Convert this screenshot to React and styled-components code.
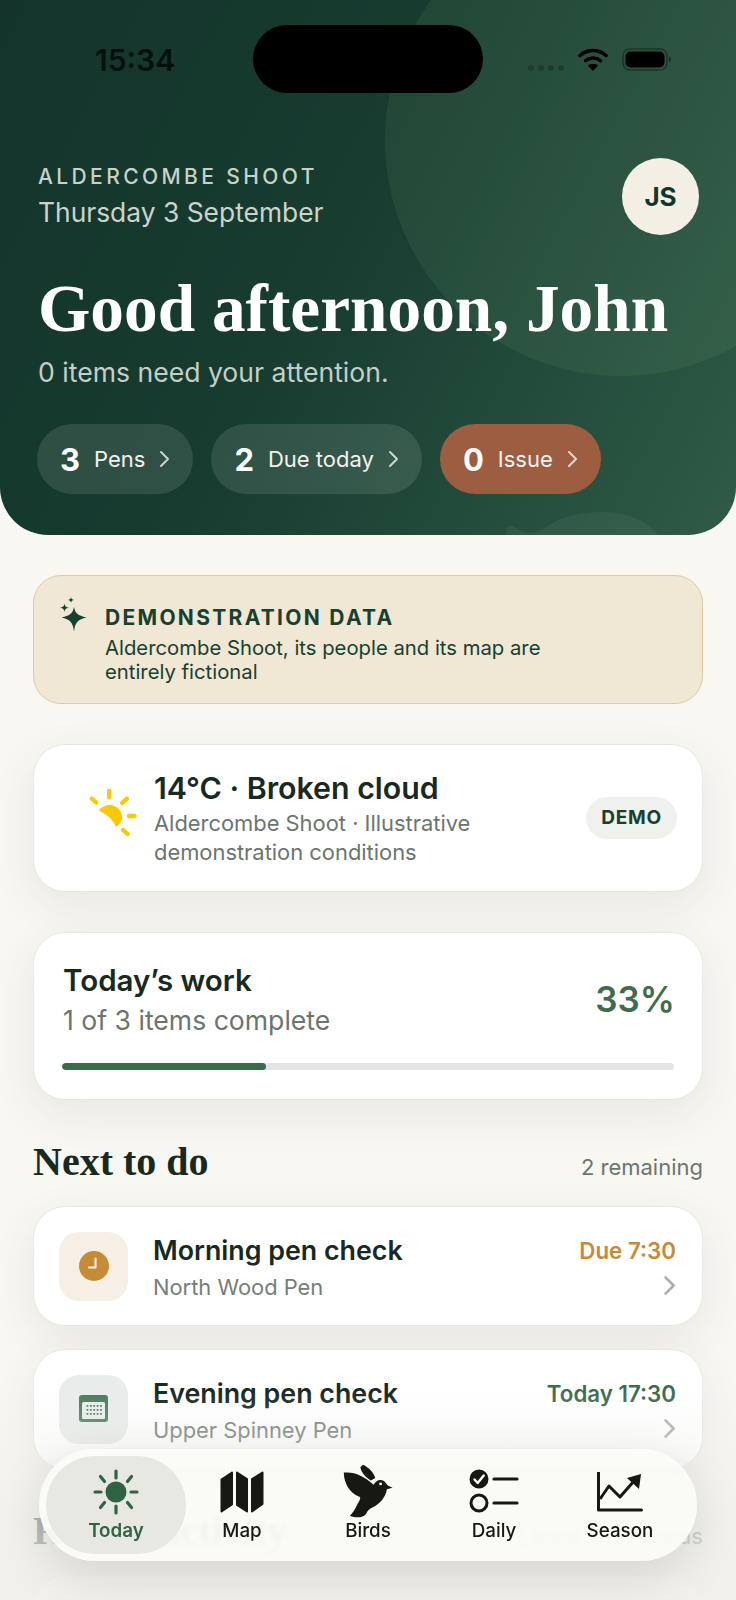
import styled, { createGlobalStyle } from "styled-components";

const GlobalStyle = createGlobalStyle`
  html, body {
    margin: 0;
    padding: 0;
    background: #f9f7f2;
  }
  * {
    box-sizing: border-box;
  }
  body {
    font-family: Inter, "Noto Sans", sans-serif;
    color: #18291f;
  }
`;

const serif = `"Liberation Serif", "Times New Roman", serif`;

const Chevron = ({ size = 14, color = "currentColor", width = 2 }) => (
  <svg width={size} height={size * 1.5} viewBox="0 0 12 18" fill="none">
    <path d="M3 2l7 7-7 7" stroke={color} strokeWidth={width} strokeLinecap="round" strokeLinejoin="round" />
  </svg>
);

const WifiIcon = () => (
  <svg width="30" height="23" viewBox="0 0 30 23">
    <path d="M2 7.5C9.5 .8 20.5 .8 28 7.5" fill="none" stroke="#000" strokeWidth="3.6" strokeLinecap="round" />
    <path d="M7.5 12.8C12 9 18 9 22.5 12.8" fill="none" stroke="#000" strokeWidth="3.4" strokeLinecap="round" />
    <path d="M15 23l-5.2-5.6C12.8 15.5 17.2 15.5 20.2 17.4z" fill="#000" />
  </svg>
);

const BatteryIcon = () => (
  <svg width="50" height="23" viewBox="0 0 50 23">
    <rect x="1" y="1" width="44" height="21" rx="7" fill="none" stroke="#000" strokeOpacity=".35" strokeWidth="1.6" />
    <rect x="3.5" y="3.5" width="39" height="16" rx="5" fill="#000" />
    <path d="M47 8.5c1.6.6 2 1.8 2 3s-.4 2.4-2 3z" fill="#000" fillOpacity=".4" />
  </svg>
);

const SparkleIcon = () => (
  <svg width="30" height="36" viewBox="0 0 30 36" fill="#17402f">
    <path d="M16 10c1.2 6 3.5 8.5 12.500 10.500C20 22.500 17.200 25 16 34.500 14.800 25 12 22.500 3.500 20.500 12.500 18.500 14.800 16 16 10z" />
    <path d="M6.500 6.500c.5 2.700 1.300 3.700 4.500 4.200-3.200.5-4 1.500-4.500 4.300-.5-2.800-1.300-3.800-4.500-4.300 3.200-.5 4-1.500 4.500-4.200z" />
    <path d="M13 0c.3 1.800.9 2.500 3 3-2.100.4-2.700 1.100-3 3-.3-1.900-.9-2.600-3-3 2.100-.5 2.700-1.200 3-3z" />
  </svg>
);

const WeatherIcon = () => (
  <svg width="52" height="50" viewBox="80 55 155 150" fill="none">
    <g stroke="#fcc800" strokeWidth="13" strokeLinecap="round">
      <path d="M146 67v19M94 90l13 11M199 90l-14 13M205 142h17M188 184l13 12" />
    </g>
    <path d="M115 125C130 104 170 100 183 135c7 20-6 33-17 40-6-20-26-36-51-50z" fill="#fcc800" />
  </svg>
);

const ClockIcon = () => (
  <svg width="32" height="32" viewBox="0 0 32 32">
    <circle cx="16" cy="16" r="15" fill="#c58b36" />
    <path d="M17.5 8.5v9H11" fill="none" stroke="#fff" strokeWidth="2" strokeLinecap="round" strokeLinejoin="round" />
  </svg>
);

const CalendarIcon = () => (
  <svg width="30" height="28" viewBox="0 0 30 28">
    <rect width="29" height="27" rx="3" fill="#4d7a5c" />
    <rect x="3" y="7" width="23" height="17" rx="1.5" fill="#e8ecea" />
    <g fill="#4d7a5c">
      {[0, 1, 2].map((row) =>
        [0, 1, 2, 3, 4].map((col) => (
          <rect key={`${row}-${col}`} x={7.5 + col * 3.4} y={10 + row * 4} width="1.8" height="1.8" />
        ))
      )}
    </g>
  </svg>
);

const SunNavIcon = () => (
  <svg width="46" height="46" viewBox="0 0 46 46" fill="none">
    <circle cx="23" cy="23" r="10.5" fill="#2e6443" />
    <g stroke="#2e6443" strokeWidth="3.2" strokeLinecap="round">
      <path d="M23 2v7M23 37v7M2 23h6M38 23h6M7.5 7.5l4 5M38.500 7.500l-4 5M7.500 38.500l4-5M38.500 38.500l-4-5" />
    </g>
  </svg>
);

const MapNavIcon = () => (
  <svg width="44" height="42" viewBox="0 0 44 42" fill="#181812" stroke="#181812" strokeWidth="2" strokeLinejoin="round">
    <path d="M1.5 8.5L12 1.5v32L1.5 40.5z" />
    <path d="M17 1.5L27 8v32.5L17 34z" />
    <path d="M32 8l10.5-6.5V33L32 40.5z" />
  </svg>
);

const BirdNavIcon = () => (
  <svg width="50" height="55" viewBox="68 40 150 166" fill="#181812">
    <path d="M70 66c30-4 60 9 90 37 5-13 20-20 32-11 6 5 8 10 11 13l14 7-17 4c-4 24-20 44-45 56-7 3-10 6-15 13-5 15-25 20-52 12 17-17 20-32 27-42 5-10 7-15 0-17C90 130 70 100 70 66z" />
    <path d="M128 42c17 8 32 23 37 40l-13 8c-17-10-30-25-32-40z" />
    <circle cx="181" cy="100" r="4.5" fill="#fcfcf7" />
  </svg>
);

const DailyNavIcon = () => (
  <svg width="50" height="46" viewBox="0 0 50 46" fill="none">
    <circle cx="10" cy="10" r="9.5" fill="#181812" />
    <path d="M5.5 10.5l3.2 3.5 6-7.5" stroke="#fcfcf7" strokeWidth="2.4" strokeLinecap="round" strokeLinejoin="round" />
    <circle cx="10" cy="34" r="8" stroke="#181812" strokeWidth="3" />
    <path d="M25 10h23M25 34h23" stroke="#181812" strokeWidth="3.2" strokeLinecap="round" />
  </svg>
);

const SeasonNavIcon = () => (
  <svg width="46" height="40" viewBox="0 0 46 40" fill="none">
    <path d="M1.5 0v38h43" stroke="#181812" strokeWidth="3" strokeLinecap="round" strokeLinejoin="round" />
    <path d="M3 27l9-13 11 11 14-16" stroke="#181812" strokeWidth="3" strokeLinejoin="round" />
    <path d="M30 6l14-4-2 15z" fill="#181812" />
  </svg>
);

const pills = [
  { count: 3, label: "Pens" },
  { count: 2, label: "Due today" },
  { count: 0, label: "Issue", alert: true },
];

const tasks = [
  { id: 1, title: "Morning pen check", place: "North Wood Pen", time: "Due 7:30", tone: "amber", icon: <ClockIcon /> },
  { id: 2, title: "Evening pen check", place: "Upper Spinney Pen", time: "Today 17:30", tone: "green", icon: <CalendarIcon /> },
];

const tabs = [
  { label: "Today", icon: <SunNavIcon />, active: true },
  { label: "Map", icon: <MapNavIcon /> },
  { label: "Birds", icon: <BirdNavIcon /> },
  { label: "Daily", icon: <DailyNavIcon /> },
  { label: "Season", icon: <SeasonNavIcon /> },
];

const App = () => {
  return (
    <Screen>
      <GlobalStyle />
      <Hero>
        <Circle />
        <Hill width="160" height="26" viewBox="0 0 160 26">
          <path d="M0 26V20C2 16 6 16 10 19c8 5 18 7 30-1C58 6 78 3 98 3c24 0 44 10 54 23z" />
        </Hill>
        <StatusBar>
          <Clock>15:34</Clock>
          <Island />
          <StatusIcons>
            <SignalDots>
              <i />
              <i />
              <i />
              <i />
            </SignalDots>
            <WifiIcon />
            <BatteryIcon />
          </StatusIcons>
        </StatusBar>
        <HeroTop>
          <div>
            <Eyebrow>ALDERCOMBE SHOOT</Eyebrow>
            <HeroDate>Thursday 3 September</HeroDate>
          </div>
          <Avatar>JS</Avatar>
        </HeroTop>
        <Greeting>Good afternoon, John</Greeting>
        <HeroNote>0 items need your attention.</HeroNote>
        <PillRow>
          {pills.map(({ count, label, alert }) => (
            <Pill key={label} $alert={alert}>
              <PillCount>{count}</PillCount>
              <PillLabel>{label}</PillLabel>
              <Chevron size={12} color="rgba(255,255,255,.75)" />
            </Pill>
          ))}
        </PillRow>
      </Hero>

      <Content>
        <Banner>
          <SparkleIcon />
          <div>
            <BannerTitle>DEMONSTRATION DATA</BannerTitle>
            <BannerText>
              Aldercombe Shoot, its people and its map are
              <br />
              entirely fictional
            </BannerText>
          </div>
        </Banner>

        <WeatherCard>
          <WeatherIcon />
          <WeatherText>
            <WeatherTitle>14°C · Broken cloud</WeatherTitle>
            <WeatherSub>
              Aldercombe Shoot · Illustrative
              <br />
              demonstration conditions
            </WeatherSub>
          </WeatherText>
          <DemoBadge>DEMO</DemoBadge>
        </WeatherCard>

        <ProgressCard>
          <ProgressHead>
            <div>
              <ProgressTitle>Today’s work</ProgressTitle>
              <ProgressSub>1 of 3 items complete</ProgressSub>
            </div>
            <Percent>33%</Percent>
          </ProgressHead>
          <Track>
            <Fill style={{ width: `${(1 / 3) * 100}%` }} />
          </Track>
        </ProgressCard>

        <Section>
          <SectionHead>
            <SectionTitle>Next to do</SectionTitle>
            <SectionMeta>2 remaining</SectionMeta>
          </SectionHead>
          <TaskList>
            {tasks.map(({ id, title, place, time, tone, icon }) => (
              <TaskCard key={id}>
                <TaskTile $tone={tone}>{icon}</TaskTile>
                <TaskMain>
                  <TaskTitle>{title}</TaskTitle>
                  <TaskPlace>{place}</TaskPlace>
                </TaskMain>
                <TaskSide>
                  <TaskTime $tone={tone}>{time}</TaskTime>
                  <Chevron size={14} color="#a9aeaa" width={2.2} />
                </TaskSide>
              </TaskCard>
            ))}
          </TaskList>
        </Section>

        <Section>
          <SectionHead>
            <SectionTitle>Recent activity</SectionTitle>
            <SectionMeta>Latest field status</SectionMeta>
          </SectionHead>
          <EmptyCard />
        </Section>
      </Content>

      <BottomFade />

      <TabBar>
        {tabs.map(({ label, icon, active }) => (
          <Tab key={label} $active={active}>
            <TabIcon>{icon}</TabIcon>
            <TabLabel $active={active}>{label}</TabLabel>
          </Tab>
        ))}
      </TabBar>
    </Screen>
  );
};

export default App;

const Screen = styled.div`
  position: relative;
  width: 736px;
  height: 1600px;
  overflow: hidden;
  background: #f9f7f2;
`;

const Hero = styled.header`
  position: relative;
  height: 535px;
  overflow: hidden;
  border-radius: 0 0 48px 48px;
  background: linear-gradient(118deg, #14342b 0%, #173c30 45%, #2f5b47 100%);
`;

const Circle = styled.div`
  position: absolute;
  left: 385px;
  top: -96px;
  width: 472px;
  height: 472px;
  border-radius: 50%;
  background: rgba(128, 176, 120, 0.11);
`;

const Hill = styled.svg`
  position: absolute;
  right: 70px;
  bottom: 0;
  fill: rgba(255, 255, 255, 0.05);
`;

const StatusBar = styled.div`
  position: relative;
  display: grid;
  grid-template-columns: 1fr 230px 1fr;
  align-items: center;
  padding-top: 25px;
`;

const Clock = styled.div`
  padding: 2px 0 0 95px;
  font-size: 30px;
  font-weight: 600;
  color: #04100b;
`;

const Island = styled.div`
  height: 68px;
  border-radius: 34px;
  background: #000;
`;

const StatusIcons = styled.div`
  display: flex;
  justify-content: flex-end;
  align-items: center;
  gap: 14px;
  padding-right: 64px;
`;

const SignalDots = styled.div`
  display: flex;
  gap: 4px;
  margin-top: 18px;

  i {
    width: 6px;
    height: 6px;
    border-radius: 50%;
    background: rgba(0, 0, 0, 0.22);
  }
`;

const HeroTop = styled.div`
  position: relative;
  display: flex;
  justify-content: space-between;
  align-items: center;
  margin-top: 65px;
  padding: 0 37px 0 38px;
`;

const Eyebrow = styled.div`
  font-size: 21px;
  line-height: 26px;
  font-weight: 500;
  letter-spacing: 3.4px;
  color: #c6d3c8;
`;

const HeroDate = styled.div`
  margin-top: 5px;
  font-size: 26.4px;
  line-height: 34px;
  color: #c9d4cc;
`;

const Avatar = styled.div`
  display: flex;
  align-items: center;
  justify-content: center;
  width: 77px;
  height: 77px;
  border-radius: 50%;
  background: #f3efe4;
  color: #14352b;
  font-size: 26px;
  font-weight: 700;
`;

const Greeting = styled.h1`
  position: relative;
  margin: 36px 0 0 38px;
  font-family: ${serif};
  font-size: 67.3px;
  line-height: 76px;
  font-weight: 700;
  color: #fff;
  white-space: nowrap;
`;

const HeroNote = styled.p`
  position: relative;
  margin: 9px 0 0 38px;
  font-size: 26.6px;
  line-height: 32px;
  color: #c3cfc7;
`;

const PillRow = styled.div`
  position: relative;
  display: flex;
  gap: 18px;
  margin: 36px 0 0 37px;
`;

const Pill = styled.div`
  display: flex;
  align-items: center;
  height: 70px;
  padding: 0 23px;
  border-radius: 35px;
  background: ${({ $alert }) => ($alert ? "#9d5d40" : "rgba(255, 255, 255, 0.11)")};
`;

const PillCount = styled.span`
  font-size: 31px;
  font-weight: 700;
  color: #fff;
`;

const PillLabel = styled.span`
  margin: 0 13px 0 14px;
  font-size: 22px;
  color: #f3f3ee;
`;

const Content = styled.main`
  display: flex;
  flex-direction: column;
  gap: 40px;
  padding: 40px 33px 0;
`;

const Banner = styled.section`
  display: flex;
  gap: 17px;
  padding: 21px 24px 20px;
  border: 1.5px solid #e3c99f;
  border-radius: 28px;
  background: #f0e7d5;
  color: #17402f;
`;

const BannerTitle = styled.div`
  margin-top: 8px;
  font-size: 21px;
  line-height: 26px;
  font-weight: 700;
  letter-spacing: 2.3px;
`;

const BannerText = styled.div`
  margin-top: 5px;
  font-size: 20.3px;
  line-height: 23.5px;
`;

const Card = styled.section`
  border: 1.5px solid #e8e8e2;
  border-radius: 32px;
  background: #fff;
  box-shadow: 0 14px 44px rgba(70, 70, 50, 0.09);
`;

const WeatherCard = styled(Card)`
  display: flex;
  align-items: center;
  gap: 15px;
  height: 148px;
  padding: 0 25px 0 53px;

  > svg {
    margin-bottom: 12px;
  }
`;

const WeatherText = styled.div`
  flex: 1;
`;

const WeatherTitle = styled.div`
  font-size: 30.3px;
  line-height: 38px;
  font-weight: 600;
  color: #18291f;
`;

const WeatherSub = styled.div`
  margin-top: 2px;
  font-size: 21.9px;
  line-height: 29px;
  color: #6b756f;
`;

const DemoBadge = styled.div`
  padding: 10px 15px;
  border-radius: 21px;
  background: #eff2ec;
  color: #17402f;
  font-size: 19px;
  line-height: 22px;
  font-weight: 700;
  letter-spacing: 0.8px;
`;

const ProgressCard = styled(Card)`
  height: 168px;
  padding: 28px 27px 0 29px;
`;

const ProgressHead = styled.div`
  display: flex;
  justify-content: space-between;
  align-items: center;
`;

const ProgressTitle = styled.div`
  font-size: 29.5px;
  line-height: 38px;
  font-weight: 600;
  color: #18291f;
`;

const ProgressSub = styled.div`
  margin-top: 5px;
  font-size: 26.6px;
  line-height: 32px;
  color: #6b756f;
`;

const Percent = styled.div`
  font-size: 35px;
  font-weight: 600;
  color: #3f6b4f;
`;

const Track = styled.div`
  height: 7px;
  margin: 27px 1px 0 -1px;
  border-radius: 4px;
  background: #e4e4e2;
  overflow: hidden;
`;

const Fill = styled.div`
  height: 100%;
  border-radius: 4px;
  background: #3a6b4c;
`;

const Section = styled.section``;

const SectionHead = styled.div`
  display: flex;
  justify-content: space-between;
  align-items: baseline;
  margin-bottom: 22px;
`;

const SectionTitle = styled.h2`
  margin: 0;
  font-family: ${serif};
  font-size: 40px;
  line-height: 44px;
  font-weight: 700;
  color: #18291f;
`;

const SectionMeta = styled.div`
  font-size: 22px;
  color: #6b756f;
`;

const TaskList = styled.div`
  display: flex;
  flex-direction: column;
  gap: 23px;
`;

const TaskCard = styled(Card)`
  display: flex;
  align-items: center;
  height: 120px;
  padding: 0 26px 0 25px;
`;

const TaskTile = styled.div`
  display: flex;
  align-items: center;
  justify-content: center;
  flex: none;
  width: 69px;
  height: 69px;
  border-radius: 20px;
  background: ${({ $tone }) => ($tone === "amber" ? "#f6efe5" : "#e8ecea")};
`;

const TaskMain = styled.div`
  flex: 1;
  padding: 2px 0 0 25px;
`;

const TaskTitle = styled.div`
  font-size: 26.8px;
  line-height: 34px;
  font-weight: 600;
  color: #18291f;
`;

const TaskPlace = styled.div`
  margin-top: 6px;
  font-size: 21.9px;
  line-height: 28px;
  color: #757e78;
`;

const TaskSide = styled.div`
  display: flex;
  flex-direction: column;
  align-items: flex-end;
  gap: 10px;
`;

const TaskTime = styled.div`
  font-size: 22.3px;
  line-height: 28px;
  font-weight: 600;
  color: ${({ $tone }) => ($tone === "amber" ? "#c58b36" : "#3f6b4f")};
`;

const EmptyCard = styled(Card)`
  height: 120px;
`;

const BottomFade = styled.div`
  position: absolute;
  left: 0;
  right: 0;
  bottom: 0;
  height: 210px;
  background: linear-gradient(180deg, rgba(240, 239, 235, 0) 0%, rgba(240, 239, 235, 0.7) 60%, rgba(240, 239, 235, 0.9) 100%);
  pointer-events: none;
`;

const TabBar = styled.nav`
  position: absolute;
  left: 39px;
  bottom: 39px;
  display: grid;
  grid-template-columns: repeat(5, 126px);
  width: 658px;
  height: 112px;
  padding: 7px 14px;
  border-radius: 56px;
  background: rgba(252, 252, 247, 0.87);
  backdrop-filter: blur(2px);
  box-shadow: 0 14px 50px rgba(0, 0, 0, 0.12);
`;

const Tab = styled.div`
  display: flex;
  flex-direction: column;
  align-items: center;
  padding-top: 8px;
  border-radius: 49px;
  ${({ $active }) => $active && `margin: 0 -7px; background: #e8e8e3;`}
`;

const TabIcon = styled.div`
  display: flex;
  align-items: center;
  justify-content: center;
  height: 55px;
`;

const TabLabel = styled.div`
  font-size: 18.8px;
  line-height: 24px;
  font-weight: ${({ $active }) => ($active ? 600 : 500)};
  color: ${({ $active }) => ($active ? "#2e6443" : "#181812")};
`;
